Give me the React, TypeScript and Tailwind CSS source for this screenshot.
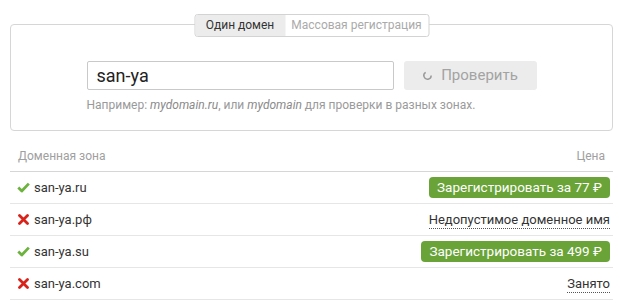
import { useState } from 'react'

const rows = [
  { name: 'san-ya.ru', ok: true, price: 'Зарегистрировать за 77 ₽' },
  { name: 'san-ya.рф', ok: false, note: 'Недопустимое доменное имя' },
  { name: 'san-ya.su', ok: true, price: 'Зарегистрировать за 499 ₽' },
  { name: 'san-ya.com', ok: false, note: 'Занято' },
]

function Check() {
  return (
    <svg width="13" height="11" viewBox="0 0 13 11">
      <path d="M1.3 5.6 L4.8 9 L11.8 1.6" fill="none" stroke="#6cb33e" strokeWidth="2.8" strokeLinejoin="round" />
    </svg>
  )
}

function Cross() {
  return (
    <svg width="11" height="11" viewBox="0 0 11 11">
      <path d="M1.5 1.5 L9.5 9.5 M9.5 1.5 L1.5 9.5" stroke="#d8231b" strokeWidth="2.8" strokeLinecap="round" />
    </svg>
  )
}

export default function App() {
  const [domain, setDomain] = useState('san-ya')
  const [tab, setTab] = useState(0)

  return (
    <div className="w-[620px] h-[306px] bg-white overflow-hidden pt-[24px] font-['Roboto',sans-serif]">
      {/* search box */}
      <div className="relative ml-[10px] w-[603px] h-[107px] border border-[#d6d6d6] rounded-[4px]">
        <div className="absolute -top-[11px] left-1/2 -translate-x-1/2 flex h-[23px] border border-[#d3d3d3] rounded-[3px] bg-white text-[12px] overflow-hidden">
          <button
            onClick={() => setTab(0)}
            className={`w-[90px] leading-[21px] ${tab === 0 ? 'bg-[#ececec] text-[#333]' : 'text-[#aaa]'}`}
          >
            Один домен
          </button>
          <button
            onClick={() => setTab(1)}
            className={`w-[143px] leading-[21px] ${tab === 1 ? 'bg-[#ececec] text-[#333]' : 'text-[#aaa]'}`}
          >
            Массовая регистрация
          </button>
        </div>

        <div className="w-[450px] mx-auto mt-[36px]">
          <div className="flex gap-[10px]">
            <input
              value={domain}
              onChange={(e) => setDomain(e.target.value)}
              className="w-[307px] h-[29px] border border-[#c9c9c9] rounded-[2px] px-[9px] text-[18px] text-[#222] outline-none"
            />
            <button className="w-[133px] h-[29px] rounded-[3px] bg-[#ececec] text-[#a3a3a3] text-[15px] flex items-center justify-center gap-[8px]">
              <svg width="11" height="11" viewBox="0 0 12 12">
                <path d="M10 6 A4 4 0 1 1 4 2.6" fill="none" stroke="#9a9a9a" strokeWidth="1.6" />
              </svg>
              Проверить
            </button>
          </div>
          <p className="mt-[6px] text-[12px] text-[#9a9a9a]">
            Например: <i className="text-[#8a8a8a]">mydomain.ru</i>, или <i className="text-[#8a8a8a]">mydomain</i> для проверки в разных зонах.
          </p>
        </div>
      </div>

      {/* results */}
      <div className="ml-[10px] w-[603px] mt-[10px]">
        <div className="flex justify-between items-center h-[31px] border-b border-[#d6d6d6] px-[8px] text-[12px] text-[#a0a0a0]">
          <span>Доменная зона</span>
          <span>Цена</span>
        </div>
        {rows.map((r) => (
          <div key={r.name} className="flex justify-between items-center h-[32px] border-b border-[#e6e6e6] pl-[7px] pr-[3px]">
            <div className="flex items-center gap-[4px] text-[13px] text-[#333]">
              <span className="w-[13px] flex justify-center">{r.ok ? <Check /> : <Cross />}</span>
              {r.name}
            </div>
            {r.price ? (
              <button className="h-[21px] px-[8px] rounded-[4px] bg-[#6aa337] text-white text-[13.5px] leading-[21px]">
                {r.price}
              </button>
            ) : (
              <span className="text-[13px] text-[#333] border-b border-dotted border-[#555] leading-[17px]">{r.note}</span>
            )}
          </div>
        ))}
      </div>
    </div>
  )
}
